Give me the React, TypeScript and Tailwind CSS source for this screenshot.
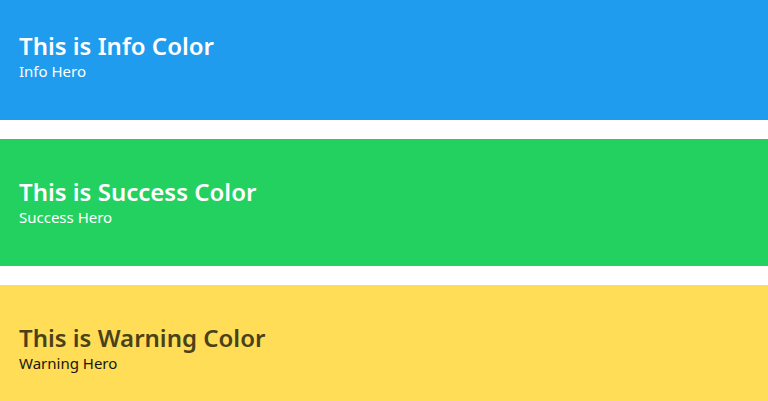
const heroes = [
  { title: 'This is Info Color', subtitle: 'Info Hero', bg: 'bg-[#209cee]', titleColor: 'text-white', subColor: 'text-white' },
  { title: 'This is Success Color', subtitle: 'Success Hero', bg: 'bg-[#23d160]', titleColor: 'text-white', subColor: 'text-white' },
  { title: 'This is Warning Color', subtitle: 'Warning Hero', bg: 'bg-[#ffdd57]', titleColor: 'text-[#4a4119]', subColor: 'text-[#191710]' },
];

const App = () => {
  return (
    <div className="h-[401px] overflow-hidden bg-white font-['Noto_Sans',sans-serif]">
      <div className="-mt-[7px] flex flex-col gap-[19px]">
        {heroes.map((hero) => (
          <section key={hero.title} className={`${hero.bg} h-[127px] px-[19px] flex flex-col justify-center`}>
            <h1 className={`${hero.titleColor} text-[24px] leading-[30px] font-semibold`}>{hero.title}</h1>
            <p className={`${hero.subColor} text-[15px] leading-[21px]`}>{hero.subtitle}</p>
          </section>
        ))}
      </div>
    </div>
  );
};

export default App;
